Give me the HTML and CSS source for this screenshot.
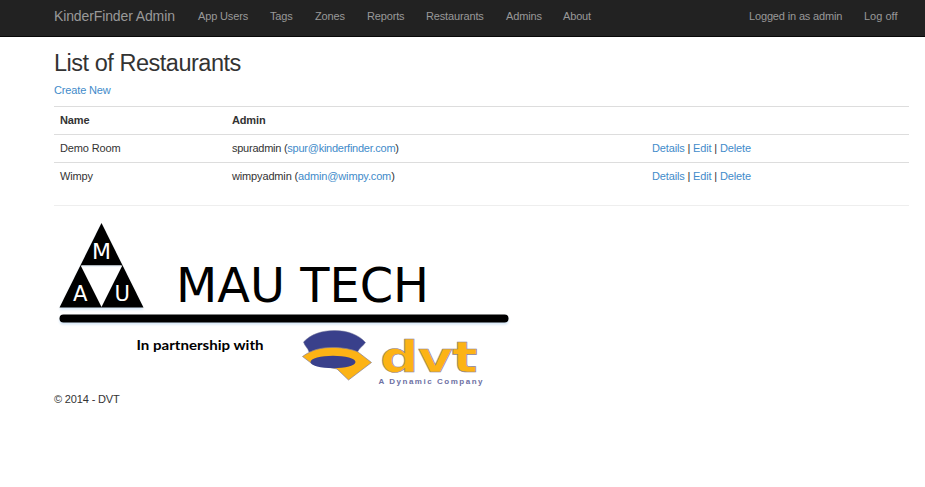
FILE: index.html
```html
<!DOCTYPE html>
<html lang="en">
<head>
<meta charset="utf-8">
<title>List of Restaurants</title>
<link rel="stylesheet" href="styles.css">
</head>
<body>
<header class="navbar">
  <nav class="container nav">
    <a class="brand" href="#">KinderFinder Admin</a>
    <a class="w-app" href="#">App Users</a>
    <a class="w-tags" href="#">Tags</a>
    <a class="w-zones" href="#">Zones</a>
    <a class="w-reports" href="#">Reports</a>
    <a class="w-rest" href="#">Restaurants</a>
    <a class="w-admins" href="#">Admins</a>
    <a href="#">About</a>
    <a class="w-logged" href="#">Logged in as admin</a>
    <a class="w-logoff" href="#">Log off</a>
  </nav>
</header>
<main class="container">
  <h1>List of Restaurants</h1>
  <p class="create"><a href="#">Create New</a></p>
  <table>
    <colgroup><col class="c-name"><col class="c-admin"><col></colgroup>
    <tr><th>Name</th><th>Admin</th><th></th></tr>
    <tr><td>Demo Room</td><td class="mail">spuradmin (<a href="#">spur@kinderfinder.com</a>)</td><td><a href="#">Details</a> | <a href="#">Edit</a> | <a href="#">Delete</a></td></tr>
    <tr><td>Wimpy</td><td>wimpyadmin (<a href="#">admin@wimpy.com</a>)</td><td><a href="#">Details</a> | <a href="#">Edit</a> | <a href="#">Delete</a></td></tr>
  </table>
  <hr>
  <footer>
    <svg class="logo" width="466" height="175" viewBox="54 217 466 175">
      <g class="glow">
        <path d="M101.500 223L143.500 307.500H59.500Z"/>
        <rect x="59.500" y="314.500" width="449" height="8" rx="4"/>
      </g>
      <path fill="#fff" d="M80.700 265.500H122.300L101.500 307Z"/>
      <path stroke="#dceaf6" d="M82 266H121"/>
      <g class="sans" fill="#fff" font-size="20.500">
        <text x="92" y="258.500" textLength="19" lengthAdjust="spacingAndGlyphs">M</text>
        <text x="73" y="300.500" textLength="14.500" lengthAdjust="spacingAndGlyphs">A</text>
        <text x="114.500" y="300.500" textLength="15.500" lengthAdjust="spacingAndGlyphs">U</text>
      </g>
      <text class="sans" x="176" y="302" font-size="47.500" textLength="253" lengthAdjust="spacingAndGlyphs">MAU TECH</text>
      <text class="partner" x="136.500" y="350" font-size="13" textLength="127" lengthAdjust="spacingAndGlyphs">In partnership with</text>
      <path fill="#39408b" stroke="#77799a" stroke-width=".5" d="M303.500 342C311 334 322 330.500 334.500 330.500C348 330.500 359 335 365.500 342.500C363 346 359.500 348 357.500 352H309C308 348 304.500 346 303.500 342Z"/>
      <path fill="#fcb315" stroke="#858097" stroke-width=".7" d="M302.500 356.500C312 349.500 322 347 336 347.500C346 348 354 350 358 352L371.500 362.500L348.500 380L337 369L311 363Z"/>
      <ellipse cx="333" cy="362" rx="22.500" ry="6.300" fill="#39408b"/>
      <text class="dvt" x="380" y="371.500" font-size="42" textLength="97" lengthAdjust="spacingAndGlyphs">dvt</text>
      <text class="tag" x="378.500" y="383.500" font-size="8" textLength="104">A Dynamic Company</text>
    </svg>
    <p class="copy">© 2014 - DVT</p>
  </footer>
</main>
</body>
</html>
```
FILE: styles.css
```css
* { box-sizing: border-box; }
body {
  margin: 0;
  background: #fff;
  color: #333;
  font: 11px/15px "Liberation Sans", Arial, sans-serif;
  letter-spacing: -.15px;
}
a { color: #428bca; text-decoration: none; }
.container { width: 855px; margin-left: 54px; }
.navbar { height: 37px; background: #222; border-bottom: 1px solid #080808; }
.nav { display: flex; line-height: 15px; padding-top: 9px; white-space: nowrap; }
.nav a { color: #999; flex: none; }
.nav .brand { width: 144px; font-size: 14px; letter-spacing: -.12px; }
.nav .w-app { width: 72px; }
.nav .w-tags { width: 45px; }
.nav .w-zones { width: 52px; }
.nav .w-reports { width: 59px; }
.nav .w-rest { width: 80px; }
.nav .w-admins { width: 57px; }
.nav .w-logged { width: 115px; margin-left: auto; }
.nav .w-logoff { width: 45px; letter-spacing: 0; }
h1 { margin: 14px 0 7px; font-size: 23.5px; line-height: 25px; font-weight: 400; letter-spacing: -.48px; }
.create { margin: 0 0 8px; }
table { width: 100%; table-layout: fixed; border-collapse: collapse; }
.c-name { width: 172px; }
.c-admin { width: 420px; }
th, td { height: 28px; padding: 0 6px; text-align: left; border-top: 1px solid #ddd; }
.mail { letter-spacing: -.25px; }
hr { margin: 14px 0 11px; border: 0; border-top: 1px solid #eee; }
.logo { display: block; letter-spacing: 0; }
.glow { filter: drop-shadow(0 2px 1px #d5e7f7); }
.sans { font-family: "DejaVu Sans", sans-serif; }
.partner { font-family: Lato, sans-serif; font-weight: 700; }
.dvt { font-family: "DejaVu Sans", sans-serif; font-weight: 700; letter-spacing: -.5px; fill: #fcb315; stroke: #8a8298; stroke-width: .6px; }
.tag { font-family: "Liberation Sans", sans-serif; font-weight: 700; fill: #6d70a3; }
.copy { margin: 0; }
```
